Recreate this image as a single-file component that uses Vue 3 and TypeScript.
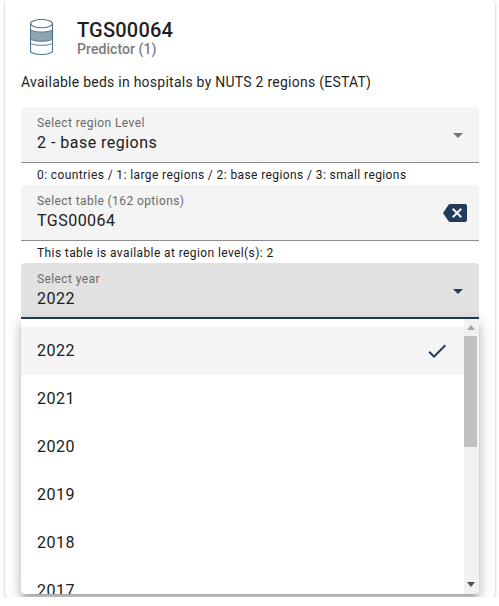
<script setup lang="ts">
const years: string[] = ['2022', '2021', '2020', '2019', '2018', '2017']
</script>

<template>
  <div class="card">
    <header class="head">
      <svg class="db" width="24" height="38" viewBox="0 0 24 38" fill="none">
        <path d="M.5 10c0 1.700 4.900 3 11 3s11-1.300 11-3v9.500c0 1.700-4.900 2.700-11 2.700s-11-1-11-2.700z" fill="#8da4b2" />
        <ellipse cx="11.500" cy="4.600" rx="11" ry="4.100" stroke="#4d7488" stroke-width="1.100" />
        <path d="M.5 4.600v27.400c0 1.900 4.900 3.500 11 3.500s11-1.600 11-3.500V4.600" stroke="#4d7488" stroke-width="1.100" />
        <path d="M.5 10c0 1.700 4.900 3 11 3s11-1.300 11-3M.5 19.500c0 1.700 4.900 2.700 11 2.700s11-1 11-2.700M.5 23.500c0 1.700 4.900 2.800 11 2.800s11-1.100 11-2.800" stroke="#4d7488" stroke-width="1" />
      </svg>
      <div class="titles">
        <div class="title">TGS00064</div>
        <div class="sub">Predictor (1)</div>
      </div>
    </header>
    <p class="desc">Available beds in hospitals by NUTS 2 regions (ESTAT)</p>

    <div class="field">
      <div class="text">
        <div class="label">Select region Level</div>
        <div class="value">2 - base regions</div>
      </div>
      <svg class="caret" width="24" height="24" viewBox="0 0 24 24"><path d="M7 10l5 5 5-5H7z" fill="#757575" /></svg>
    </div>
    <div class="hint">0: countries / 1: large regions / 2: base regions / 3: small regions</div>

    <div class="field">
      <div class="text">
        <div class="label">Select table (162 options)</div>
        <div class="value">TGS00064</div>
      </div>
      <svg class="caret clear" width="24" height="24" viewBox="0 0 24 24"><path d="M22 3H7c-.69 0-1.230.350-1.590.880L0 12l5.410 8.110c.360.530.900.890 1.590.890h15a2 2 0 0 0 2-2V5a2 2 0 0 0-2-2m-3 12.590L17.590 17 14 13.410 10.410 17 9 15.590 12.590 12 9 8.410 10.410 7 14 10.590 17.590 7 19 8.410 15.410 12" fill="#233c5c" /></svg>
    </div>
    <div class="hint">This table is available at region level(s): 2</div>

    <div class="year-wrap">
      <div class="field active">
        <div class="text">
          <div class="label">Select year</div>
          <div class="value">2022</div>
        </div>
        <svg class="caret" width="24" height="24" viewBox="0 0 24 24"><path d="M7 10l5 5 5-5H7z" fill="#233c5c" /></svg>
      </div>

      <div class="menu">
        <ul class="list">
          <li v-for="(y, i) in years" :key="y" class="item" :class="{ selected: i === 0 }">
            <span class="year">{{ y }}</span>
            <svg v-if="i === 0" class="check" width="24" height="24" viewBox="0 0 24 24"><path d="M21 7L9 19l-5.500-5.500 1.410-1.410L9 16.170 19.590 5.590 21 7z" fill="#233c5c" /></svg>
          </li>
        </ul>
        <div class="scrollbar">
          <span class="arrow up"></span>
          <span class="thumb"></span>
          <span class="arrow down"></span>
        </div>
      </div>
    </div>
  </div>
</template>

<style scoped>
.card {
  box-sizing: border-box;
  width: 490px;
  height: 597px;
  margin: 0 5px;
  padding: 19px 16px 0;
  background: #fff;
  border-radius: 4px;
  box-shadow: 0 1px 3px rgba(0, 0, 0, 0.25), 0 0 2px rgba(0, 0, 0, 0.08);
  font-family: Roboto, sans-serif;
  color: #1f1f1f;
}
.head {
  display: flex;
  align-items: flex-start;
  height: 38px;
  padding-left: 9px;
}
.db { flex: none; }
.titles {
  margin-left: 23px;
}
.title {
  font-size: 20px;
  font-weight: 500;
  line-height: 22px;
  letter-spacing: 0.01em;
}
.sub {
  font-size: 14px;
  font-weight: 500;
  line-height: 17px;
  color: #7b7b7b;
  letter-spacing: 0.005em;
}
.desc {
  margin: 15px 0 15px;
  font-size: 14px;
  line-height: 20px;
  letter-spacing: 0.0178em;
}
.field {
  box-sizing: border-box;
  height: 56px;
  display: flex;
  align-items: center;
  justify-content: space-between;
  padding: 0 9px 0 16px;
  background: #f4f4f4;
  border-radius: 4px 4px 0 0;
  border-bottom: 1px solid #8e8e8e;
}
.field.active {
  padding-top: 1px;
  background: #e2e2e2;
  border-bottom: 2px solid #233c5c;
}
.label {
  font-size: 12px;
  line-height: 16px;
  letter-spacing: 0.0333em;
  color: #6a6a6a;
}
.value {
  font-size: 16px;
  line-height: 24px;
  letter-spacing: 0.03em;
  color: #202020;
}
.caret { flex: none; }
.caret.clear { margin-right: 3px; }
.hint {
  height: 22px;
  padding: 5px 16px 0;
  box-sizing: border-box;
  font-size: 12px;
  line-height: 14px;
  letter-spacing: 0.0333em;
  color: #202020;
}
.year-wrap { position: relative; }
.menu {
  position: absolute;
  left: 0;
  right: 0;
  top: 56px;
  height: 275px;
  display: flex;
  background: #fff;
  overflow: hidden;
  border-radius: 0 0 4px 4px;
  box-shadow: 0 5px 5px -3px rgba(0, 0, 0, 0.2), 0 8px 10px 1px rgba(0, 0, 0, 0.14), 0 3px 14px 2px rgba(0, 0, 0, 0.12);
}
.list {
  flex: 1;
  list-style: none;
  margin: 0;
  padding: 8px 0 0;
  overflow: hidden;
}
.item {
  box-sizing: border-box;
  height: 48px;
  display: flex;
  align-items: center;
  justify-content: space-between;
  padding: 0 15px 0 16px;
  font-size: 16px;
  letter-spacing: 0.03em;
  color: #202020;
}
.year { padding-bottom: 2px; }
.item.selected { background: #f5f5f5; }
.check { flex: none; }
.scrollbar {
  flex: none;
  box-sizing: border-box;
  width: 15px;
  background: #f1f1f1;
  position: relative;
}
.arrow {
  position: absolute;
  left: 3px;
  width: 0;
  height: 0;
  border-left: 4px solid transparent;
  border-right: 4px solid transparent;
}
.arrow.up { top: 6px; border-bottom: 5px solid #a3a3a3; }
.arrow.down { bottom: 7px; border-top: 5px solid #505050; }
.thumb {
  position: absolute;
  left: 0;
  top: 17px;
  width: 13px;
  height: 111px;
  background: #c1c1c1;
}
</style>
